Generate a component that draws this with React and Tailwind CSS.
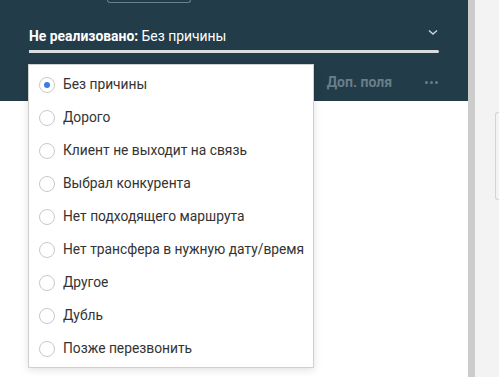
import React from "react";

const items = [
  "Без причины",
  "Дорого",
  "Клиент не выходит на связь",
  "Выбрал конкурента",
  "Нет подходящего маршрута",
  "Нет трансфера в нужную дату/время",
  "Другое",
  "Дубль",
  "Позже перезвонить",
];

export default function App() {
  return (
    <div
      className="relative flex w-[499px] h-[377px] overflow-hidden bg-white text-[14px]"
      style={{ fontFamily: "Roboto, 'Noto Sans', sans-serif" }}
    >
      <div className="flex flex-col w-[468px] h-full">
        <div className="h-[101px] bg-[#233c49] px-[29px] flex flex-col">
          <div className="ml-[78px] w-[84px] h-[3px] border-x border-b border-[#6a808d] rounded-b-[4px]" />
          <div className="mt-[23px] h-[20px] flex items-center justify-between text-white">
            <div className="leading-[20px] text-[13.9px]">
              <span className="font-bold">Не реализовано:</span> Без причины
            </div>
            <svg width="10" height="7" viewBox="0 0 10 7" className="mr-[1px] mb-[8px]">
              <path d="M1 1.5 L5 5 L9 1.5" stroke="#c9d2d8" strokeWidth="1.5" fill="none" />
            </svg>
          </div>
          <div className="mt-[4px] h-[3px] w-[410px] rounded-r-full bg-[#d9dcde]" />
          <div className="mt-[19px] h-[20px] flex items-center justify-end gap-[33px] text-[#6a7e89] font-bold">
            <span>Доп. поля</span>
            <span className="flex gap-[2px] mr-[1px]">
              <span className="w-[3px] h-[3px] rounded-full bg-[#6a7e89]" />
              <span className="w-[3px] h-[3px] rounded-full bg-[#6a7e89]" />
              <span className="w-[3px] h-[3px] rounded-full bg-[#6a7e89]" />
            </span>
          </div>
        </div>
        <div className="flex-1 bg-white" />
      </div>
      <div className="w-[7px] h-full bg-[#cccccc]" />
      <div className="flex-1 h-full bg-[#f3f3f3] pl-[20px] pt-[112px]">
        <div className="h-[88px] border-l border-t border-b border-[#d4d4d4] rounded-l-[3px]" />
      </div>

      <div className="absolute left-[28px] top-[64px] w-[286px] bg-white border border-[#cfcfcf] shadow-[0_2px_8px_rgba(0,0,0,0.12)] pt-[3px] pb-[2px]">
        {items.map((t, i) => (
          <div key={t} className="h-[33px] flex items-center pl-[10px] text-[#333333] text-[13.8px]">
            <span className="w-[16px] h-[16px] rounded-full border border-[#c8c8c8] flex items-center justify-center">
              {i === 0 && <span className="w-[6px] h-[6px] rounded-full bg-[#3a7ee0]" />}
            </span>
            <span className="ml-[8px]">{t}</span>
          </div>
        ))}
      </div>
    </div>
  );
}
